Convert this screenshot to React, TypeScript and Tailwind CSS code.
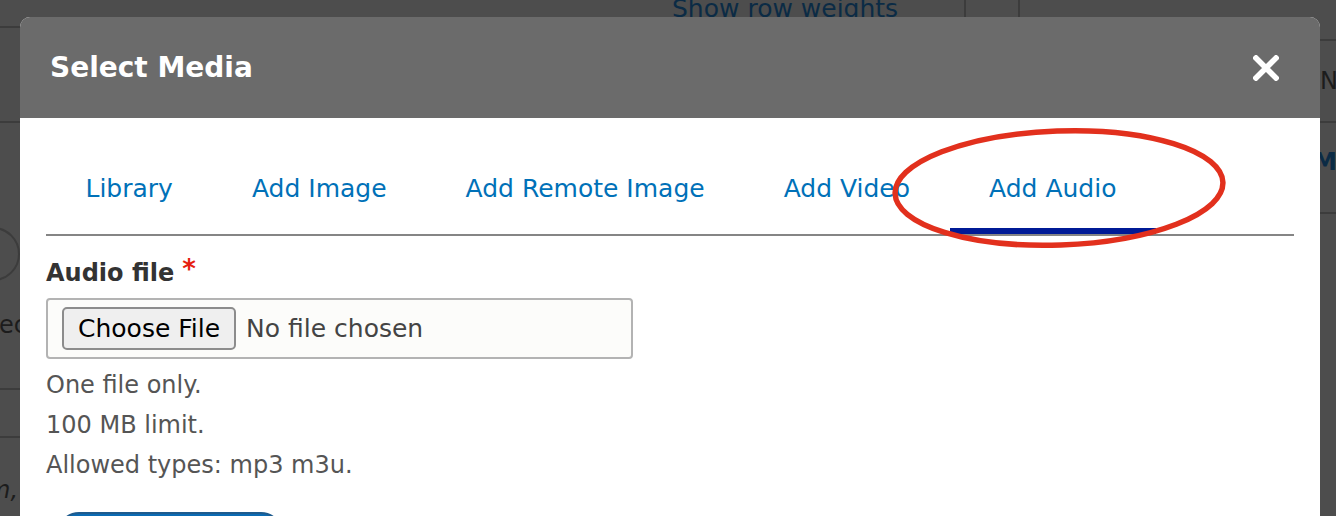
import React from "react";

const tabs = ["Library", "Add Image", "Add Remote Image", "Add Video", "Add Audio"];

function CloseIcon() {
  return (
    <svg width="26" height="26" viewBox="0 0 26 26" aria-hidden="true">
      <path d="M3 3 L23 23 M23 3 L3 23" stroke="#fff" strokeWidth="5.5" strokeLinecap="square" />
    </svg>
  );
}

// the page under the overlay, only its edges show around the modal
function PageBehind() {
  return (
    <div className="flex h-[516px] w-[1336px] bg-[#4d4d4d] text-[24px] leading-8 text-[#1c1c1c]">
      <div className="flex w-[20px] flex-col overflow-hidden">
        <div className="h-[26px]" />
        <div className="h-[95px] border-t-2 border-[#3c3c3c]" />
        <div className="flex h-[267px] flex-col border-t-2 border-[#3c3c3c] pt-[104px]">
          <div className="-ml-[40px] h-[54px] w-[60px] shrink-0 rounded-full border-2 border-[#3c3c3c]" />
          <div className="-ml-[1px] mt-[28px] whitespace-nowrap">ec</div>
        </div>
        <div className="h-[48px] border-t-2 border-[#3c3c3c]" />
        <div className="flex-1 border-t-2 border-[#3c3c3c] pt-[36px]">
          <div className="-ml-[13px] whitespace-nowrap italic">m,</div>
        </div>
      </div>

      <div className="flex h-[17px] w-[1300px] overflow-hidden">
        <div className="w-[652px]" />
        <div className="-mt-[7px] w-[292px] whitespace-nowrap text-[25px] text-[#0b2b45]">Show row weights</div>
        <div className="w-[54px] border-l-2 border-[#3c3c3c]" />
        <div className="flex-1 border-l-2 border-[#3c3c3c]" />
      </div>

      <div className="flex w-[16px] flex-col overflow-hidden">
        <div className="h-[39px]" />
        <div className="h-[82px] border-t-2 border-[#3c3c3c] pt-[24px]">
          <div className="whitespace-nowrap">No</div>
        </div>
        <div className="h-[91px] border-t-2 border-[#3c3c3c] pt-[23px]">
          <div className="-ml-[7px] whitespace-nowrap font-bold text-[#0b2b45]">MA</div>
        </div>
        <div className="flex-1 border-t-2 border-[#3c3c3c]" />
      </div>
    </div>
  );
}

export default function App() {
  return (
    <div
      className="relative h-[516px] w-[1336px] overflow-hidden"
      style={{ fontFamily: '"DejaVu Sans", Verdana, sans-serif' }}
    >
      <PageBehind />

      <div className="absolute left-[20px] top-[17px] h-[520px] w-[1300px] rounded-t-[10px] bg-white">
        <div className="flex h-[101px] items-center justify-between rounded-t-[10px] bg-[#6b6b6b] pl-[30px] pr-[41px]">
          <h1 className="text-[28px] font-bold leading-8 text-white">Select Media</h1>
          <button className="flex h-[26px] w-[26px] items-center justify-center">
            <CloseIcon />
          </button>
        </div>

        <div className="px-[26px]">
          <ul className="flex w-[1248px] border-b-2 border-[#858585]">
            {tabs.map((t) => {
              const active = t === "Add Audio";
              return (
                <li key={t} className="flex flex-col">
                  <span className="whitespace-nowrap px-[39.5px] pt-[55px] pb-[23px] text-[25px] leading-8 text-[#0071b8]">
                    {t}
                  </span>
                  <span className={active ? "h-[6px] bg-[#001a96]" : "h-[6px]"} />
                </li>
              );
            })}
          </ul>

          <div className="mt-[21px] flex items-start text-[24px] font-bold leading-8 text-[#333]">
            Audio file
            <span className="ml-[8px] mt-[-4px] text-[26px] text-[#e61e0f]">*</span>
          </div>

          <div className="mt-[9px] flex h-[61px] w-[587px] items-center rounded-[4px] border-2 border-[#b3b3b3] bg-[#fcfcfa] pl-[14px]">
            <button className="h-[43px] rounded-[5px] border-2 border-[#8c8c8c] bg-[#efefef] px-[14px] text-[25px] leading-8 text-black">
              Choose File
            </button>
            <span className="ml-[10px] text-[25px] leading-8 text-[#444]">No file chosen</span>
          </div>

          <div className="mt-[6px] text-[24px] leading-[40px] text-[#555]">
            <p>One file only.</p>
            <p>100 MB limit.</p>
            <p>Allowed types: mp3 m3u.</p>
          </div>

          <button className="ml-[11px] mt-[27px] h-[44px] w-[226px] rounded-[22px] border-2 border-[#1d5b8e] bg-[#0b6bb3]" />
        </div>
      </div>

      <svg className="pointer-events-none absolute left-0 top-0" width="1336" height="516" aria-hidden="true">
        <ellipse cx="1059" cy="188" rx="164" ry="57" transform="rotate(-2 1059 188)" fill="none" stroke="#e2301d" strokeWidth="5.5" />
      </svg>
    </div>
  );
}
